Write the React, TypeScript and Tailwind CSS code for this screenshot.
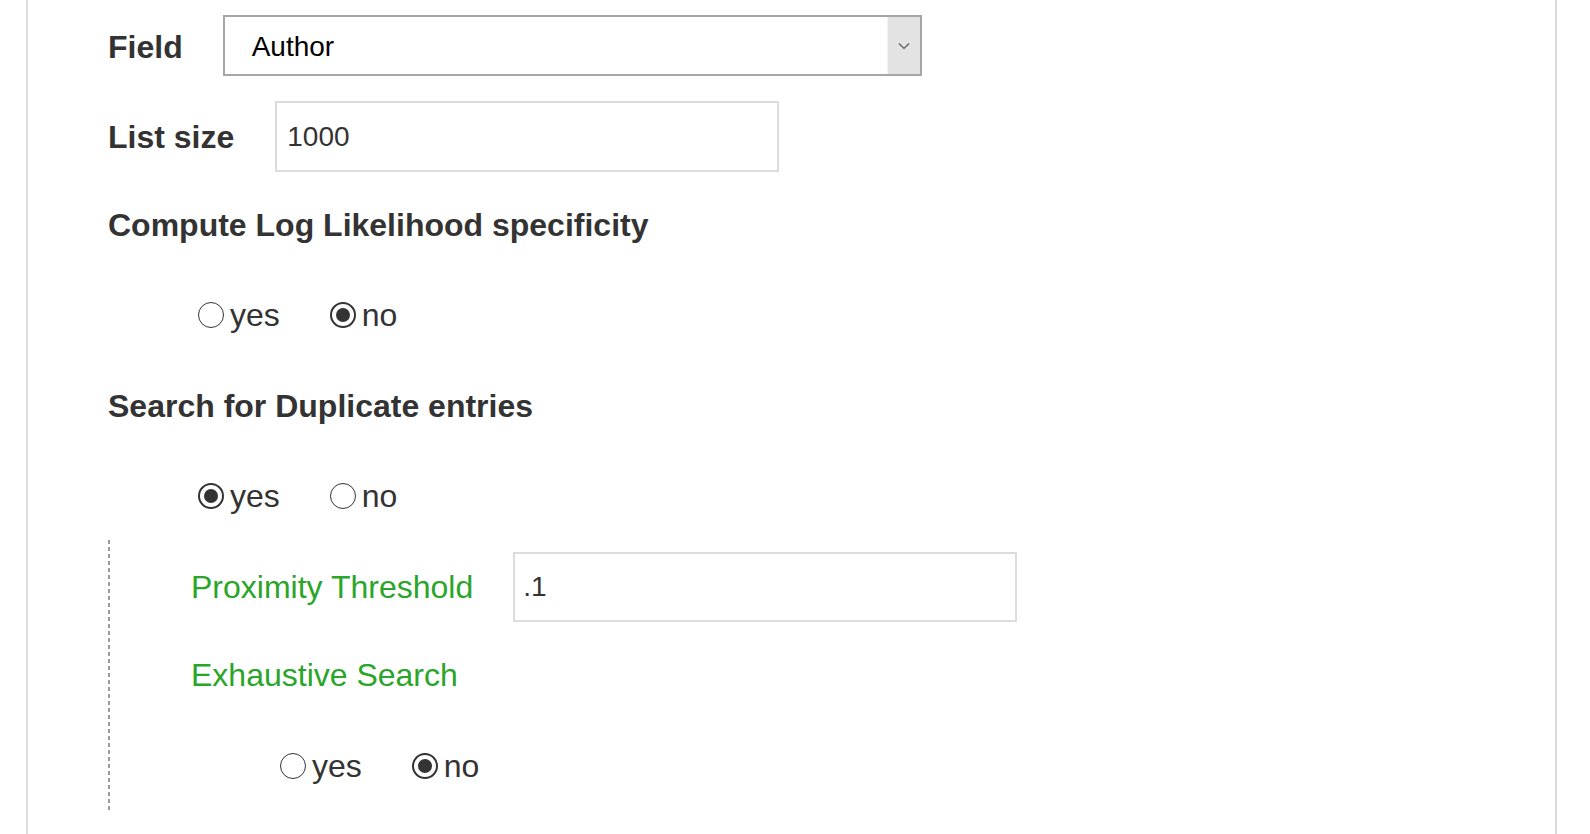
import React from "react";

function Radio({ checked, label }: { checked?: boolean; label: string }) {
  return (
    <label className="flex items-center gap-[6px]">
      <span
        className={
          checked
            ? "w-[26px] h-[26px] rounded-full border-2 border-[#333] bg-white flex items-center justify-center"
            : "w-[26px] h-[26px] rounded-full border-[1.75px] border-[#333] bg-white flex items-center justify-center"
        }
      >
        {checked && <span className="w-[14px] h-[14px] rounded-full bg-[#333]" />}
      </span>
      <span className="text-[32px] leading-[36px] text-[#333]">{label}</span>
    </label>
  );
}

function RadioGroup({ yes }: { yes: boolean }) {
  return (
    <div className="flex items-center gap-[50px] h-[36px]">
      <Radio checked={yes} label="yes" />
      <Radio checked={!yes} label="no" />
    </div>
  );
}

export default function App() {
  return (
    <div className="min-h-[834px] bg-white font-['Liberation_Sans',Arial,sans-serif]">
      <div className="ml-[26px] w-[1531px] min-h-[834px] border-x-2 border-[#dcdcdc] pl-[80px] pt-[15px] overflow-hidden">
        {/* Field */}
        <div className="flex items-center gap-[40px] h-[61px]">
          <span className="text-[32px] font-bold text-[#333] leading-[36px] pt-[2px]">Field</span>
          <div className="flex h-[61px] w-[699px] border-2 border-[#a6a6a6] bg-white">
            <div className="flex-1 flex items-center pl-[27px] pt-[3px] text-[28px] text-black">Author</div>
            <div className="w-[33px] bg-[#e3e3e3] border-l border-[#f4f4f4] flex items-center justify-center">
              <svg width="12" height="8" viewBox="0 0 12 8">
                <path d="M1 1.5 L6 6.5 L11 1.5" fill="none" stroke="#555" strokeWidth="1.1" />
              </svg>
            </div>
          </div>
        </div>

        {/* List size */}
        <div className="flex items-center gap-[41px] h-[71px] mt-[25px]">
          <span className="text-[32px] font-bold text-[#333] leading-[36px]">List size</span>
          <div className="h-[71px] w-[504px] border-2 border-[#dcdcdc] flex items-center pl-[10px] text-[28px] text-[#333]">
            1000
          </div>
        </div>

        {/* Compute Log Likelihood */}
        <div className="mt-[35px] text-[32px] font-bold text-[#333] leading-[36px]">
          Compute Log Likelihood specificity
        </div>
        <div className="mt-[54px] pl-[90px]">
          <RadioGroup yes={false} />
        </div>

        {/* Search for Duplicate */}
        <div className="mt-[55px] text-[32px] font-bold text-[#333] leading-[36px]">
          Search for Duplicate entries
        </div>
        <div className="mt-[54px] pl-[90px]">
          <RadioGroup yes={true} />
        </div>

        {/* Dashed sub-block */}
        <div className="mt-[26px] flex">
          <div className="w-[2px] bg-[repeating-linear-gradient(to_bottom,#9a9a9a_0px,#9a9a9a_4px,transparent_4px,transparent_7px)]" />
          <div className="pl-[81px] pt-[12px] pb-[27px]">
            <div className="flex items-center gap-[40px] h-[70px]">
              <span className="text-[32px] text-[#2aa52a] leading-[36px]">Proximity Threshold</span>
              <div className="h-[70px] w-[504px] border-2 border-[#dcdcdc] flex items-center pl-[8px] text-[28px] text-[#333]">
                .1
              </div>
            </div>
            <div className="mt-[35px] text-[32px] text-[#2aa52a] leading-[36px]">Exhaustive Search</div>
            <div className="mt-[55px] pl-[89px]">
              <RadioGroup yes={false} />
            </div>
          </div>
        </div>
      </div>
    </div>
  );
}
